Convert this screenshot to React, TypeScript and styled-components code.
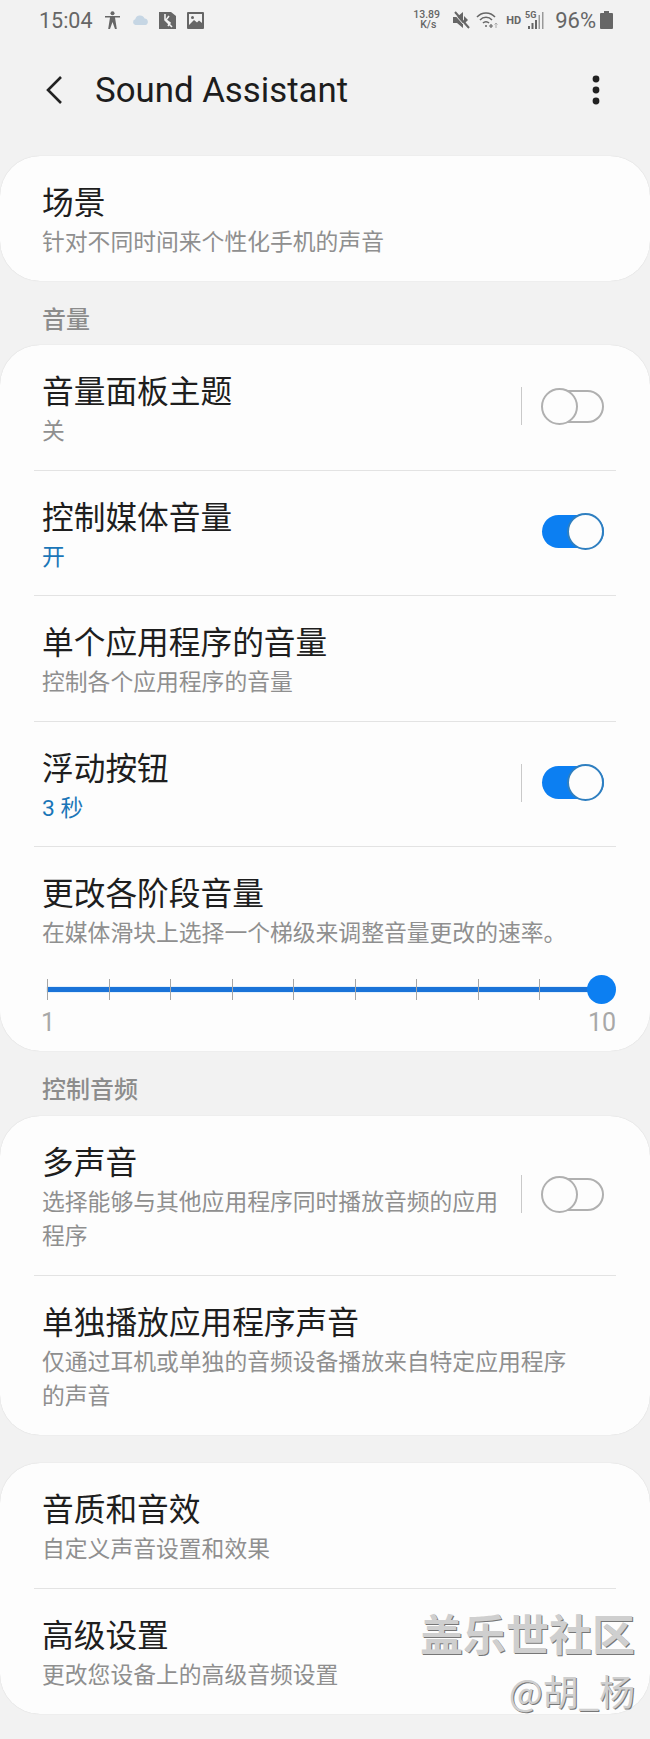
import { createGlobalStyle } from 'styled-components'
import styled from 'styled-components'

const GlobalStyle = createGlobalStyle`
	html, body {
		margin: 0;
		padding: 0;
		background-color: #f2f2f2;
	}
`

const Page = styled.div`
	position: relative;
	width: 650px;
	height: 1739px;
	overflow: hidden;
	background-color: #f2f2f2;
	font-family: Roboto, "Noto Sans CJK SC", sans-serif;
`

const StatusBar = styled.div`
	height: 40px;
	padding: 0 37px 0 39px;
	display: flex;
	align-items: center;
	justify-content: space-between;
	color: #666;
`

const StatusGroup = styled.div`
	display: flex;
	align-items: center;
`

const Clock = styled.span`
	font-size: 21.5px;
	width: 66px;
`

const NetSpeed = styled.span`
	width: 39px;
	font-size: 10.5px;
	font-weight: 500;
	line-height: 10px;
	text-align: left;
	span {
		display: block;
		width: 30px;
		text-align: center;
	}
`

const HdLabel = styled.span`
	font-size: 11px;
	font-weight: 700;
	margin: 0 4px 0 8px;
`

const Percent = styled.span`
	font-size: 22px;
	margin: 0 4px 0 10px;
`

const Header = styled.div`
	height: 100px;
	padding: 0 50px 16px 45px;
	display: flex;
	align-items: center;
	color: #1d1d1d;
`

const HeaderTitle = styled.h1`
	flex: 1;
	margin: 0 0 0 32px;
	font-size: 34.8px;
	font-weight: 400;
`

const Card = styled.section<{ $gap?: number }>`
	background-color: #fdfdfd;
	border-radius: 40px;
	margin-top: ${p => p.$gap ?? 0}px;
	box-shadow: 0 0 1px rgba(0, 0, 0, 0.18);
`

const SectionLabel = styled.h2<{ $height?: number }>`
	margin: 0;
	height: ${p => p.$height ?? 65}px;
	padding: 22px 42px 0;
	box-sizing: border-box;
	font-size: 24px;
	line-height: 34px;
	font-weight: 500;
	color: #8c8c8c;
`

const Row = styled.div<{ $divider?: boolean }>`
	position: relative;
	display: flex;
	align-items: center;
	padding: 29px 46px 21.4px 42px;
	${p => p.$divider && `
		&::after {
			content: '';
			position: absolute;
			left: 34px;
			right: 34px;
			bottom: 0;
			height: 1px;
			background-color: #e3e3e3;
		}
	`}
`

const RowText = styled.div`
	flex: 1;
	min-width: 0;
`

const Title = styled.div`
	font-size: 31.7px;
	line-height: 38px;
	color: #1e1e1e;
`

const Sub = styled.div<{ $on?: boolean }>`
	margin-top: 3px;
	font-size: 22.8px;
	line-height: 34px;
	color: ${p => (p.$on ? '#1b76b8' : '#8f8f8f')};
`

const Separator = styled.div`
	width: 1px;
	height: 38px;
	margin: 0 20px 11px 19px;
	background-color: #c9c9c9;
`

const ToggleTrack = styled.div<{ $on?: boolean }>`
	position: relative;
	flex: none;
	width: 62px;
	height: 33px;
	margin-bottom: 11px;
	box-sizing: border-box;
	border-radius: 17px;
	background-color: ${p => (p.$on ? '#0c7ff2' : 'transparent')};
	border: ${p => (p.$on ? 'none' : '2px solid #b0b0b0')};
`

const ToggleThumb = styled.div<{ $on?: boolean }>`
	position: absolute;
	top: ${p => (p.$on ? '-2px' : '-4px')};
	${p => (p.$on ? 'right: 0;' : 'left: -3px;')}
	width: 37px;
	height: 37px;
	box-sizing: border-box;
	border-radius: 50%;
	background-color: #fdfdfd;
	border: 2px solid ${p => (p.$on ? '#2f7fc0' : '#b0b0b0')};
`

const SliderRow = styled.div`
	padding: 12px 34px 0 41px;
	height: 100px;
	box-sizing: border-box;
	margin-top: -21px;
`

const SliderTrack = styled.div`
	position: relative;
	margin: 11px 14px 0 6px;
	height: 30px;
	display: flex;
	align-items: center;
	justify-content: space-between;
`

const SliderFill = styled.div`
	position: absolute;
	left: 0;
	right: 0;
	top: 13px;
	height: 5px;
	background-color: #1a73d8;
	box-shadow: 0 0 1px #6bb8f5;
`

const SliderTick = styled.div`
	position: relative;
	width: 1px;
	height: 21px;
	background-color: #a5a5a5;
`

const SliderThumb = styled.div`
	position: absolute;
	right: -14px;
	top: 1px;
	width: 29px;
	height: 29px;
	border-radius: 50%;
	background-color: #0c7ff2;
`

const SliderLabels = styled.div`
	display: flex;
	justify-content: space-between;
	font-size: 25px;
	line-height: 30px;
	margin-top: 4px;
	color: #a8a8a8;
`

const Watermark = styled.div`
	position: absolute;
	right: 15px;
	top: 1602px;
	text-align: right;
	font-family: "Noto Sans CJK SC", sans-serif;
	color: #cfcfcf;
	text-shadow: 1px 1px 0 #777;
`

const WatermarkBrand = styled.div`
	font-size: 43px;
	line-height: 60px;
	font-weight: 700;
`

const WatermarkUser = styled.div`
	margin-top: 6px;
	font-size: 36px;
	line-height: 44px;
	font-weight: 400;
`

const Icon = styled.svg<{ $left?: number }>`
	display: block;
	flex: none;
	margin-left: ${p => p.$left ?? 0}px;
`

function Toggle({ on, separator }: { on?: boolean; separator?: boolean }) {
	return <>
		{separator && <Separator />}
		<ToggleTrack $on={on}><ToggleThumb $on={on} /></ToggleTrack>
	</>
}

function BackIcon() {
	return <Icon width="18" height="30" viewBox="0 0 18 30" fill="none" stroke="#222" strokeWidth="2.6">
		<path d="M16 2 L3 15 L16 28" />
	</Icon>
}

function MoreIcon() {
	return <Icon width="8" height="30" viewBox="0 0 8 30" fill="#222">
		<circle cx="4" cy="4" r="3.4" />
		<circle cx="4" cy="15" r="3.4" />
		<circle cx="4" cy="26" r="3.4" />
	</Icon>
}

function PersonIcon() {
	return <Icon width="15" height="18" viewBox="0 0 15 18" fill="#666">
		<circle cx="7.5" cy="2.2" r="2" />
		<path d="M0 5 H15 V6.6 H10 L11.8 18 H10 L7.5 11 L5 18 H3.2 L5 6.6 H0 Z" />
	</Icon>
}

function CloudIcon() {
	return <Icon $left={12} width="17" height="12" viewBox="0 0 17 12" fill="#c6d6e4">
		<path d="M3.4 11 A3 3 0 0 1 3.2 5.2 A5 5 0 0 1 12.6 4.4 A3.4 3.4 0 0 1 13.6 11 Z" />
	</Icon>
}

function NfcIcon() {
	return <Icon $left={10} width="17" height="17" viewBox="0 0 17 17">
		<path fill="#666" d="M0 0 H12 L17 4 V17 H0 Z" />
		<path fill="none" stroke="#f2f2f2" strokeWidth="1.6" d="M6 2 V8 L13 15 M10 4 L7 8 L11 11 L9 14" />
	</Icon>
}

function ImageIcon() {
	return <Icon $left={11} width="17" height="17" viewBox="0 0 17 17">
		<rect width="17" height="17" rx="1" fill="#666" />
		<rect x="2" y="2" width="13" height="13" fill="#f2f2f2" />
		<circle cx="5.5" cy="5.5" r="1.5" fill="#666" />
		<path fill="#666" d="M2 13 L7 8 L10 10.5 L12 8.5 L15 11 V15 H2 Z" />
	</Icon>
}

function MuteIcon() {
	return <Icon width="18" height="18" viewBox="0 0 18 18">
		<path fill="#666" d="M1 6 H5 L11 1 V17 L5 12 H1 Z" />
		<path fill="#666" d="M12 5 L16 9 L12 13 Z" />
		<path stroke="#666" strokeWidth="2" d="M3 1 L17 17" />
		<path stroke="#f2f2f2" strokeWidth="1" d="M1.5 2.2 L15.5 18" />
	</Icon>
}

function WifiIcon() {
	return <Icon $left={6} width="22" height="18" viewBox="0 0 22 18" fill="none" stroke="#666" strokeWidth="1.5">
		<path d="M1 6 A12 12 0 0 1 19 6" />
		<path d="M4 9 A8 8 0 0 1 16 9" />
		<path d="M7 12 A4 4 0 0 1 13 12" />
		<circle cx="10" cy="15" r="1" fill="#666" stroke="none" />
		<path strokeWidth="1.2" d="M13 15 H17 M15 13 V17" />
		<path stroke="#aaa" strokeWidth="1" d="M20 17 V12 M18.5 13.5 L20 12 L21.5 13.5" />
	</Icon>
}

function SignalIcon() {
	return <Icon width="20" height="20" viewBox="0 0 20 20" fill="#666">
		<text x="0" y="8" fontSize="9" fontWeight="700" fontFamily="Roboto, sans-serif">5G</text>
		<rect x="3" y="16" width="2" height="3" />
		<rect x="6.5" y="13" width="2" height="6" />
		<rect x="10" y="10" width="2" height="9" />
		<rect x="13.5" y="5" width="1.5" height="14" fill="#999" />
		<rect x="17" y="2" width="1.5" height="17" fill="#999" />
	</Icon>
}

function BatteryIcon() {
	return <Icon width="13" height="18" viewBox="0 0 13 18" fill="#666">
		<rect x="4" y="0" width="5" height="3" />
		<rect x="0" y="2" width="13" height="16" rx="1" />
	</Icon>
}

const TICK_COUNT = 10

export default function App() {
	return <Page>
		<GlobalStyle />
		<StatusBar>
			<StatusGroup>
				<Clock>15:04</Clock>
				<PersonIcon />
				<CloudIcon />
				<NfcIcon />
				<ImageIcon />
			</StatusGroup>
			<StatusGroup>
				<NetSpeed>13.89<span>K/s</span></NetSpeed>
				<MuteIcon />
				<WifiIcon />
				<HdLabel>HD</HdLabel>
				<SignalIcon />
				<Percent>96%</Percent>
				<BatteryIcon />
			</StatusGroup>
		</StatusBar>
		<Header>
			<BackIcon />
			<HeaderTitle>Sound Assistant</HeaderTitle>
			<MoreIcon />
		</Header>
		<Card>
			<Row>
				<RowText>
					<Title>场景</Title>
					<Sub>针对不同时间来个性化手机的声音</Sub>
				</RowText>
			</Row>
		</Card>
		<SectionLabel $height={64}>音量</SectionLabel>
		<Card>
			<Row $divider>
				<RowText>
					<Title>音量面板主题</Title>
					<Sub>关</Sub>
				</RowText>
				<Toggle separator />
			</Row>
			<Row $divider>
				<RowText>
					<Title>控制媒体音量</Title>
					<Sub $on>开</Sub>
				</RowText>
				<Toggle on />
			</Row>
			<Row $divider>
				<RowText>
					<Title>单个应用程序的音量</Title>
					<Sub>控制各个应用程序的音量</Sub>
				</RowText>
			</Row>
			<Row $divider>
				<RowText>
					<Title>浮动按钮</Title>
					<Sub $on>3 秒</Sub>
				</RowText>
				<Toggle on separator />
			</Row>
			<Row>
				<RowText>
					<Title>更改各阶段音量</Title>
					<Sub>在媒体滑块上选择一个梯级来调整音量更改的速率。</Sub>
				</RowText>
			</Row>
			<SliderRow>
				<SliderTrack>
					<SliderFill />
					{Array.from({ length: TICK_COUNT }, (_, i) => <SliderTick key={i} />)}
					<SliderThumb />
				</SliderTrack>
				<SliderLabels><span>1</span><span>10</span></SliderLabels>
			</SliderRow>
		</Card>
		<SectionLabel>控制音频</SectionLabel>
		<Card>
			<Row $divider>
				<RowText>
					<Title>多声音</Title>
					<Sub>选择能够与其他应用程序同时播放音频的应用程序</Sub>
				</RowText>
				<Toggle separator />
			</Row>
			<Row>
				<RowText>
					<Title>单独播放应用程序声音</Title>
					<Sub>仅通过耳机或单独的音频设备播放来自特定应用程序<br />的声音</Sub>
				</RowText>
			</Row>
		</Card>
		<Card $gap={28}>
			<Row $divider>
				<RowText>
					<Title>音质和音效</Title>
					<Sub>自定义声音设置和效果</Sub>
				</RowText>
			</Row>
			<Row>
				<RowText>
					<Title>高级设置</Title>
					<Sub>更改您设备上的高级音频设置</Sub>
				</RowText>
			</Row>
		</Card>
		<Watermark>
			<WatermarkBrand>盖乐世社区</WatermarkBrand>
			<WatermarkUser>@胡_杨</WatermarkUser>
		</Watermark>
	</Page>
}
